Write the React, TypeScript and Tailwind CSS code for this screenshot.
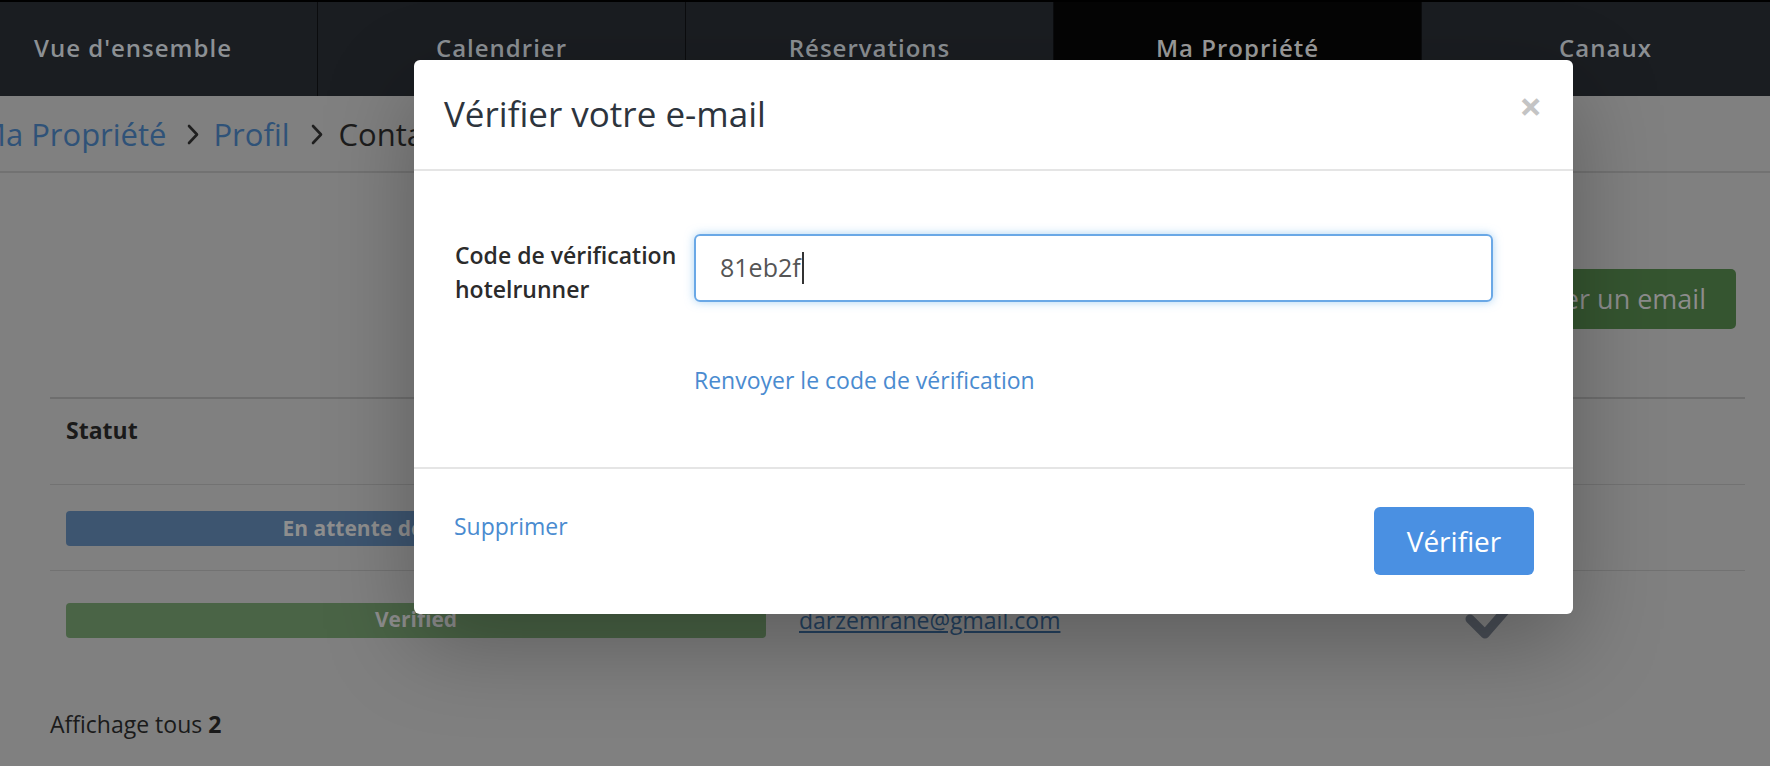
import React from "react";

const font = { fontFamily: '"Open Sans", "Liberation Sans", sans-serif' };

function CheckIcon() {
  return (
    <svg width="56" height="48" viewBox="0 0 56 48" fill="none">
      <path d="M7 26 L22 41 L49 10" stroke="#4a4f57" strokeWidth="9" strokeLinecap="round" strokeLinejoin="round" />
    </svg>
  );
}

function Chevron() {
  return (
    <svg width="12" height="21" viewBox="0 0 12 21" fill="none" className="shrink-0">
      <path d="M2 2 L10 10.5 L2 19" stroke="#1f1f1f" strokeWidth="2.6" strokeLinecap="round" strokeLinejoin="round" />
    </svg>
  );
}

export default function App() {
  const tabs = ["Vue d'ensemble", "Calendrier", "Réservations", "Ma Propriété", "Canaux"];
  return (
    <div className="relative w-[1770px] h-[766px] overflow-hidden bg-[#808080]" style={font}>
      <div className="-ml-[51px] w-[1840px]">
        {/* Top nav */}
        <div className="flex h-[96px] border-t-2 border-black bg-[#1a1d21]">
          {tabs.map((t, i) => (
            <div
              key={t}
              className={
                "flex w-[368px] items-center justify-center pb-[2px] text-[24px] font-semibold tracking-[1px] " +
                (i === 3 ? "bg-[#050505] text-[#9c9c9c] " : "text-[#8c9094] ") +
                (i > 0 ? "border-l border-[#0b0c0e]" : "")
              }
            >
              {t}
            </div>
          ))}
        </div>

        {/* Breadcrumb */}
        <div className="flex h-[77px] items-center border-b-2 border-[#727272] pl-[29px] pt-[2px] text-[31px]">
          <span className="text-[#2f5278]">Ma Propriété</span>
          <span className="ml-[21px] mr-[14px] flex"><Chevron /></span>
          <span className="text-[#2f5278]">Profil</span>
          <span className="ml-[21px] mr-[16px] flex"><Chevron /></span>
          <span className="text-[#1c1c1c]">Contacts</span>
        </div>

        {/* Content */}
        <div className="pl-[101px] pr-[44px]">
          <div className="flex justify-end pt-[96px] pr-[9px]">
            <div className="flex h-[60px] items-center rounded-[5px] bg-[#355530] px-[30px] text-[27px] text-[#8c8c8c]">
              Ajouter un email
            </div>
          </div>

          <div className="mt-[68px] border-t-2 border-[#6e6e6e]">
            <div className="flex h-[86px] border-b border-[#727272] pt-[14px] pl-[16px]">
              <span className="text-[23px] font-bold text-[#1a1a1a]">Statut</span>
            </div>
            <div className="flex h-[86px] items-center border-b border-[#727272] pl-[16px] pt-[2px]">
              <div className="flex h-[35px] w-[700px] items-center justify-center rounded-[4px] bg-[#3d5570] text-[21px] font-bold text-[#8e8e8e]">
                En attente de vérification
              </div>
            </div>
            <div className="flex h-[96px] items-center pl-[16px] pt-[2px]">
              <div className="flex h-[35px] w-[700px] items-center justify-center rounded-[4px] bg-[#4a6446] text-[21px] font-bold text-[#8e8e8e]">
                Verified
              </div>
              <div className="ml-[33px] w-[664px]">
                <span className="text-[23px] text-[#24415f] underline">darzemrane@gmail.com</span>
              </div>
              <div className="-mt-[6px]">
                <CheckIcon />
              </div>
            </div>
          </div>

          <div className="mt-[40px] text-[23px] leading-[34px] text-[#1a1a1a]">
            Affichage tous <b>2</b>
          </div>
        </div>
      </div>

      {/* Modal */}
      <div className="absolute left-[414px] top-[60px] w-[1159px] rounded-[6px] bg-white shadow-[0_30px_90px_rgba(0,0,0,0.28)]">
        <div className="flex h-[111px] items-center justify-between border-b-2 border-[#e5e5e5] pl-[30px] pr-[31px]">
          <h2 className="text-[35px] text-[#2d343d]">Vérifier votre e-mail</h2>
          <span className="text-[40px] font-bold leading-none text-[#c4c4c4] -mt-[18px]">×</span>
        </div>

        <div className="pt-[63px] pb-[70px] pl-[41px] pr-[80px]">
          <div className="flex">
            <label className="w-[239px] pt-[4px] text-[23px] font-semibold leading-[34px] text-[#2b2b2b]">
              Code de vérification hotelrunner
            </label>
            <div className="flex h-[68px] flex-1 items-center rounded-[6px] border-2 border-[#6aa8e6] px-[24px] shadow-[0_0_10px_rgba(102,175,233,0.55)]">
              <span className="text-[25px] text-[#555]">81eb2f</span>
              <span className="ml-[1px] h-[32px] w-[2px] bg-[#333]"></span>
            </div>
          </div>
          <div className="mt-[57px] pl-[239px] text-[23px] leading-[34px] text-[#4a8bd0]">
            Renvoyer le code de vérification
          </div>
        </div>

        <div className="flex items-start justify-between border-t-2 border-[#e5e5e5] pt-[38px] pb-[39px] pl-[40px] pr-[39px]">
          <span className="mt-[2px] text-[23px] leading-[34px] text-[#4a8bd0]">Supprimer</span>
          <button className="flex h-[68px] w-[160px] items-center justify-center rounded-[6px] bg-[#4a90e2] text-[28px] text-white">
            Vérifier
          </button>
        </div>
      </div>
    </div>
  );
}
